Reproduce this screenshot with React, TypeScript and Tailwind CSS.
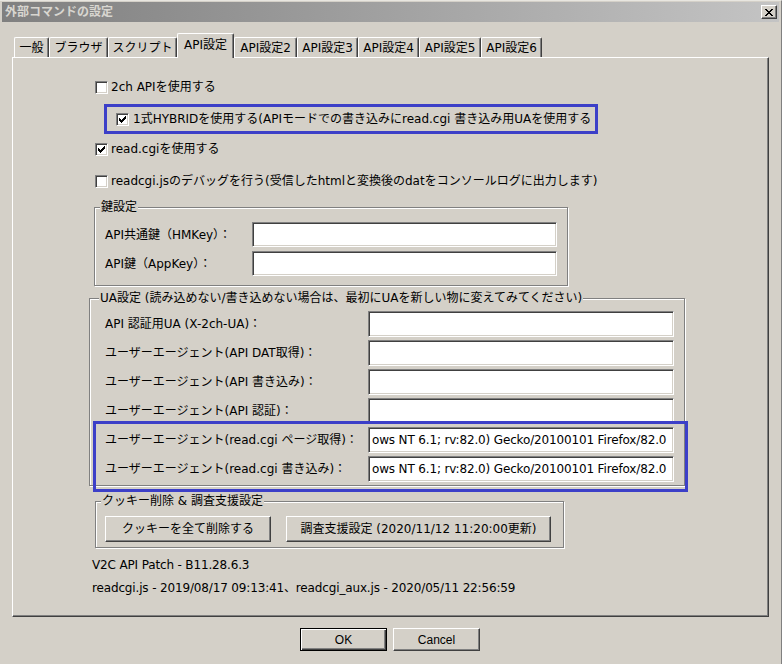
import React from 'react';

const raised =
  'bg-[#d4d0c8] border border-t-white border-l-white border-r-[#404040] border-b-[#404040] shadow-[inset_-1px_-1px_0_#808080]';
const sunken =
  'bg-white border border-t-[#808080] border-l-[#808080] border-r-white border-b-white shadow-[inset_1px_1px_0_#404040,inset_-1px_-1px_0_#d4d0c8]';

const Check: React.FC<{ on?: boolean }> = ({ on }) => (
  <span className={`w-[13px] h-[13px] shrink-0 flex items-center justify-center ${sunken}`}>
    {on && (
      <svg width="7" height="7" viewBox="0 0 7 7" shapeRendering="crispEdges">
        <path d="M6 0h1v3h-1v1h-1v1h-1v1h-1v1h-1v-1h-1v-1h-1v-3h1v1h1v1h1v-1h1v-1h1v-1h1z" fill="#000" />
      </svg>
    )}
  </span>
);

const Field: React.FC<{ w: string; h: string; text?: string }> = ({ w, h, text }) => (
  <div className={`${w} ${h} ${sunken} flex items-center pl-[3px] overflow-hidden whitespace-nowrap tracking-[-0.15px]`}>
    {text}
  </div>
);

const tabs = [
  { label: '一般', w: 'w-[35px]' },
  { label: 'ブラウザ', w: 'w-[59px]' },
  { label: 'スクリプト', w: 'w-[69px]' },
  { label: 'API設定', w: 'w-[57px]', active: true },
  { label: 'API設定2', w: 'w-[63px]' },
  { label: 'API設定3', w: 'w-[61px]' },
  { label: 'API設定4', w: 'w-[61px]' },
  { label: 'API設定5', w: 'w-[62px]' },
  { label: 'API設定6', w: 'w-[61px]' },
];

const uaRows = [
  { label: 'API 認証用UA (X-2ch-UA)：' },
  { label: 'ユーザーエージェント(API DAT取得)：' },
  { label: 'ユーザーエージェント(API 書き込み)：' },
  { label: 'ユーザーエージェント(API 認証)：' },
  { label: 'ユーザーエージェント(read.cgi ページ取得)：', value: 'ows NT 6.1; rv:82.0) Gecko/20100101 Firefox/82.0' },
  { label: 'ユーザーエージェント(read.cgi 書き込み)：', value: 'ows NT 6.1; rv:82.0) Gecko/20100101 Firefox/82.0' },
];

const etched = 'border border-[#808080] shadow-[1px_1px_0_#fff,inset_1px_1px_0_#fff]';

export default function App() {
  return (
    <div className="w-[782px] h-[664px] bg-[#d4d0c8] border-t border-t-[#e8e6e0] border-r border-r-[#808080] overflow-hidden text-[12px] leading-[14px] text-black font-['DejaVu_Sans','Noto_Sans_CJK_JP',sans-serif]">
      {/* title bar */}
      <div className="mx-[2px] mt-[1px] h-[20px] bg-linear-to-r from-[#808080] to-[#c4c4c4] flex items-center justify-between pl-[3px] pr-[2px]">
        <span className="font-bold text-[12px] text-[#d8d6d0]">外部コマンドの設定</span>
        <div className={`w-[16px] h-[14px] flex items-center justify-center ${raised}`}>
          <svg width="8" height="7" viewBox="0 0 8 7" shapeRendering="crispEdges">
            <path d="M0 0h2v1h1v1h2v-1h1v-1h2v1h-1v1h-1v1h-1v1h1v1h1v1h1v1h-2v-1h-1v-1h-2v1h-1v1h-2v-1h1v-1h1v-1h1v-1h-1v-1h-1v-1h-1z" fill="#000" />
          </svg>
        </div>
      </div>

      {/* tabs */}
      <div className="ml-[14px] mt-[11px] h-[24px] flex items-end">
        {tabs.map((t) =>
          t.active ? (
            <div
              key={t.label}
              className={`${t.w} h-[25px] -mb-px relative z-10 bg-[#d4d0c8] border-l border-t border-white border-r border-r-[#404040] rounded-t-[2px] shadow-[inset_-1px_0_0_#808080] flex items-center justify-center pb-[2px] whitespace-nowrap`}
            >
              {t.label}
            </div>
          ) : (
            <div
              key={t.label}
              className={`${t.w} h-[20px] border-l border-t border-white border-r border-r-[#404040] rounded-t-[2px] shadow-[inset_-1px_0_0_#808080] flex items-center justify-center whitespace-nowrap`}
            >
              {t.label}
            </div>
          )
        )}
      </div>

      {/* tab panel */}
      <div className="ml-[12px] w-[757px] h-[560px] relative border-l border-t border-white border-r border-b border-r-[#404040] border-b-[#404040] shadow-[inset_-1px_-1px_0_#808080] flex flex-col">
        <div className="mt-[19px] ml-[82px] h-[20px] flex items-center gap-[3px]">
          <Check />
          <span>2ch APIを使用する</span>
        </div>

        <div className="mt-[7px] ml-[91px] w-[494px] h-[30px] border-[3px] border-[#3c3fc8] flex items-center pl-[9px] gap-[4px] overflow-hidden">
          <Check on />
          <span className="whitespace-nowrap">1式HYBRIDを使用する(APIモードでの書き込みにread.cgi 書き込み用UAを使用する</span>
        </div>

        <div className="mt-[5px] ml-[82px] h-[20px] flex items-center gap-[3px]">
          <Check on />
          <span>read.cgiを使用する</span>
        </div>

        <div className="mt-[12px] ml-[82px] h-[20px] flex items-center gap-[3px]">
          <Check />
          <span className="whitespace-nowrap">readcgi.jsのデバッグを行う(受信したhtmlと変換後のdatをコンソールログに出力します)</span>
        </div>

        {/* key group */}
        <fieldset className={`mt-[9px] ml-[81px] w-[474px] ${etched}`}>
          <legend className="ml-[5px] px-[1px] bg-[#d4d0c8]">鍵設定</legend>
          <div className="pl-[10px] pt-[8px] pb-[9px] flex flex-col gap-[4px]">
            <div className="h-[25px] flex items-center">
              <span className="w-[147px] whitespace-nowrap">API共通鍵（HMKey）：</span>
              <Field w="w-[305px]" h="h-[25px]" />
            </div>
            <div className="h-[25px] flex items-center">
              <span className="w-[147px] whitespace-nowrap">API鍵（AppKey）：</span>
              <Field w="w-[305px]" h="h-[25px]" />
            </div>
          </div>
        </fieldset>

        {/* UA group */}
        <fieldset className={`mt-[5px] ml-[76px] w-[596px] ${etched}`}>
          <legend className="ml-[9px] px-[1px] bg-[#d4d0c8] whitespace-nowrap">
            UA設定 (読み込めない/書き込めない場合は、最初にUAを新しい物に変えてみてください)
          </legend>
          <div className="pl-[15px] pt-[6px] pb-[3px] flex flex-col gap-[3px]">
            {uaRows.map((r) => (
              <div key={r.label} className="h-[26px] flex items-center">
                <span className="w-[263px] whitespace-nowrap">{r.label}</span>
                <Field w="w-[306px]" h="h-[26px]" text={r.value} />
              </div>
            ))}
          </div>
        </fieldset>

        {/* cookie group */}
        <fieldset className={`mt-[8px] ml-[82px] w-[469px] ${etched}`}>
          <legend className="ml-[5px] px-[1px] bg-[#d4d0c8]">クッキー削除 &amp; 調査支援設定</legend>
          <div className="pl-[9px] pt-[8px] pb-[5px] flex gap-[15px]">
            <button className={`w-[166px] h-[26px] ${raised}`}>クッキーを全て削除する</button>
            <button className={`w-[265px] h-[26px] ${raised} whitespace-nowrap`}>調査支援設定 (2020/11/12 11:20:00更新)</button>
          </div>
        </fieldset>

        <div className="mt-[10px] ml-[79px] tracking-[-0.15px]">V2C API Patch - B11.28.6.3</div>
        <div className="mt-[9px] ml-[79px] whitespace-nowrap tracking-[-0.15px]">
          readcgi.js - 2019/08/17 09:13:41、readcgi_aux.js - 2020/05/11 22:56:59
        </div>

        {/* highlight over the read.cgi rows */}
        <div className="absolute left-[80px] top-[363px] w-[595px] h-[71px] border-[3px] border-[#3c3fc8] pointer-events-none" />
      </div>

      {/* dialog buttons */}
      <div className="mt-[11px] ml-[300px] flex gap-[6px] font-['Liberation_Sans',sans-serif]">
        <button className="w-[87px] h-[23px] bg-[#d4d0c8] border border-black shadow-[inset_1px_1px_0_#fff,inset_-1px_-1px_0_#404040,inset_-2px_-2px_0_#808080]">
          OK
        </button>
        <button className={`w-[87px] h-[23px] ${raised}`}>Cancel</button>
      </div>
    </div>
  );
}
